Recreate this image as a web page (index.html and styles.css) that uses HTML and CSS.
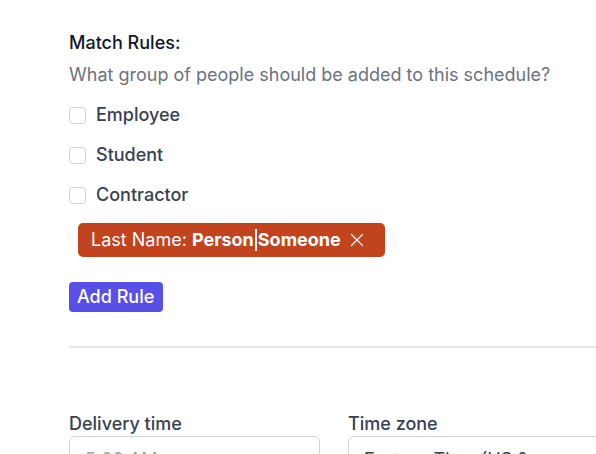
FILE: index.html
```html
<!DOCTYPE html>
<html>
<head>
<meta charset="utf-8">
<link rel="stylesheet" href="styles.css">
</head>
<body>
<div class="page">
  <section class="rules">
    <h3 class="title">Match Rules:</h3>
    <p class="subtitle">What group of people should be added to this schedule?</p>
    <div class="options">
      <label class="option"><span class="box"></span><span>Employee</span></label>
      <label class="option"><span class="box"></span><span>Student</span></label>
      <label class="option"><span class="box"></span><span>Contractor</span></label>
    </div>
    <div class="tags">
      <span class="tag">Last Name: <b>Person</b><span class="bar"></span><b>Someone</b>
        <svg class="x" width="14" height="14" viewBox="0 0 14 14"><path d="M1.5 1.5 L12.5 12.5 M12.5 1.5 L1.5 12.5" stroke="#fff" stroke-width="1.2" fill="none" stroke-linecap="round"/></svg>
      </span>
    </div>
    <button class="add">Add Rule</button>
  </section>
  <hr class="divider">
  <section class="fields">
    <div class="field">
      <div class="label">Delivery time</div>
      <div class="input placeholder">5:00 AM</div>
    </div>
    <div class="field">
      <div class="label">Time zone</div>
      <div class="input">Eastern Time (US &amp; Canada)</div>
    </div>
  </section>
</div>
</body>
</html>
```

FILE: styles.css
```css
html, body {
  margin: 0;
  padding: 0;
  background: #ffffff;
  overflow: hidden;
}
body {
  font-family: Inter, "Noto Sans", sans-serif;
  font-size: 18px;
  line-height: 24px;
  color: #374151;
}
.page {
  width: 530px;
  padding: 31px 0 0 69px;
}
.title {
  margin: 0;
  font-size: 18px;
  line-height: 24px;
  font-weight: 500;
  color: #111827;
}
.subtitle {
  margin: 8px 0 0;
  color: #6b7280;
}
.options {
  margin-top: 16px;
  display: flex;
  flex-direction: column;
  gap: 16px;
}
.option {
  display: flex;
  align-items: center;
  gap: 10px;
  font-weight: 500;
  color: #374151;
}
.box {
  width: 15px;
  height: 15px;
  border: 1px solid #d1d5db;
  border-radius: 4px;
  background: #fff;
}
.tags {
  margin: 16px 0 0 9px;
  display: flex;
}
.tag {
  display: inline-flex;
  align-items: center;
  background: #c2441f;
  color: #fff;
  border-radius: 5px;
  padding: 5px 21px 5px 13px;
  white-space: pre;
}
.tag b {
  font-weight: 700;
}
.bar {
  display: inline-block;
  width: 2px;
  height: 22px;
  background: #fff;
  margin: 0 1px;
}
.x {
  margin-left: 9px;
}
.add {
  margin-top: 25px;
  display: block;
  font-family: inherit;
  font-size: 18px;
  line-height: 24px;
  font-weight: 500;
  color: #fff;
  background: #5850e6;
  border: none;
  border-radius: 4px;
  padding: 3px 9px 3px 8px;
}
.divider {
  margin: 34px 0 0;
  border: none;
  border-top: 2px solid #e5e7eb;
}
.fields {
  margin-top: 64px;
  display: grid;
  grid-template-columns: 1fr 1fr;
  gap: 28px;
}
.label {
  font-weight: 500;
  color: #374151;
}
.input {
  margin-top: 0;
  border: 1px solid #d1d5db;
  border-radius: 6px;
  padding: 11px 15px 9px;
  color: #374151;
}
.input.placeholder {
  color: #9ca3af;
}
```
